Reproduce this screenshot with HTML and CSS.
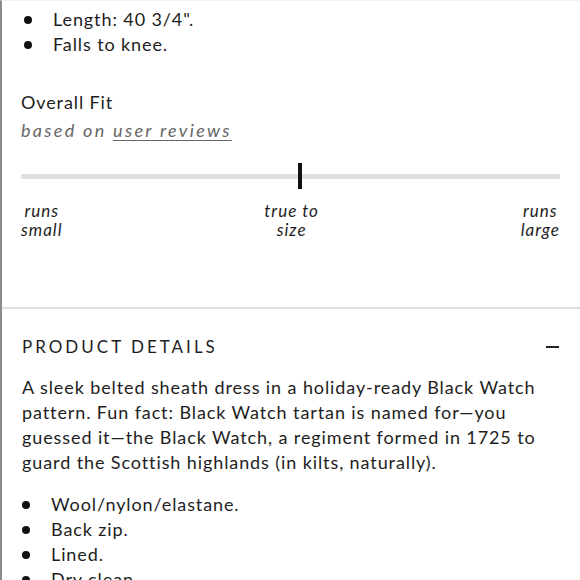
FILE: index.html
```html
<!DOCTYPE html>
<html>
<head>
<meta charset="utf-8">
<link rel="stylesheet" href="styles.css">
</head>
<body>
<div class="page">
  <ul class="bullets bullets-top">
    <li>Length: 40 3/4".</li>
    <li>Falls to knee.</li>
  </ul>
  <section class="fit">
    <h3 class="fit-title">Overall Fit</h3>
    <p class="fit-sub">based on <a class="fit-link">user reviews</a></p>
    <div class="meter">
      <div class="track"></div>
      <div class="marker" style="left: 51.3%"></div>
    </div>
    <div class="labels">
      <span class="label">runs<br>small</span>
      <span class="label">true to<br>size</span>
      <span class="label">runs<br>large</span>
    </div>
  </section>
  <section class="details">
    <div class="details-head">
      <h2 class="details-title">PRODUCT DETAILS</h2>
      <span class="minus"></span>
    </div>
    <p class="details-text">A sleek belted sheath dress in a holiday-ready Black Watch pattern. Fun fact: Black Watch tartan is named for—you guessed it—the Black Watch, a regiment formed in 1725 to guard the Scottish highlands (in kilts, naturally).</p>
    <ul class="bullets bullets-bottom">
      <li>Wool/nylon/elastane.</li>
      <li>Back zip.</li>
      <li>Lined.</li>
      <li>Dry clean.</li>
    </ul>
  </section>
</div>
</body>
</html>
```

FILE: styles.css
```css
html, body {
  margin: 0;
  padding: 0;
  background: #fff;
}
body {
  font-family: Lato, "Liberation Sans", sans-serif;
  color: #1e1e1e;
  font-size: 18px;
  letter-spacing: 0.9px;
  line-height: 25px;
  height: 580px;
  overflow: hidden;
}
.page {
  border-left: 2px solid #8a8a8a;
  border-top: 1px solid #f2f2f2;
  height: 580px;
  box-sizing: border-box;
}
.bullets {
  list-style: none;
  margin: 0;
  padding: 0;
}
.bullets li {
  display: flex;
  align-items: center;
}
.bullets li::before {
  content: "";
  width: 8px;
  height: 8px;
  border-radius: 50%;
  background: #111;
  flex: none;
}
.bullets-top {
  padding: 6px 0 0 22px;
}
.bullets-top li::before {
  margin-right: 21px;
}
.fit {
  padding: 31px 20px 0 19px;
  height: 252px;
  box-sizing: border-box;
  border-bottom: 2px solid #dedede;
}
.fit-title {
  margin: 0;
  font-weight: 400;
  font-size: 18px;
  letter-spacing: 0.9px;
  line-height: 28px;
}
.fit-sub {
  margin: 0;
  font-style: italic;
  color: #666;
  letter-spacing: 2.3px;
  font-size: 18px;
  line-height: 28px;
}
.fit-link {
  text-decoration: underline;
  text-underline-offset: 3px;
}
.meter {
  position: relative;
  height: 26px;
  margin-top: 19px;
  display: flex;
  align-items: center;
}
.track {
  height: 5px;
  background: #e0e0e0;
  flex: 1;
}
.marker {
  position: absolute;
  top: 0;
  width: 4px;
  height: 26px;
  background: #111;
}
.labels {
  display: flex;
  justify-content: space-between;
  margin-top: 12px;
  font-style: italic;
  font-size: 17px;
  letter-spacing: 1px;
  line-height: 19px;
}
.label {
  text-align: center;
}
.details {
  padding: 25px 21px 0 20px;
}
.details-head {
  display: flex;
  justify-content: space-between;
  align-items: center;
}
.details-title {
  margin: 0;
  font-weight: 400;
  font-size: 17px;
  letter-spacing: 3px;
  line-height: 26px;
}
.minus {
  width: 13px;
  height: 2px;
  background: #222;
}
.details-text {
  margin: 15px 0 0 0;
}
.bullets-bottom {
  margin-top: 17px;
  padding-left: 0;
}
.bullets-bottom li::before {
  margin-right: 21px;
}
```
